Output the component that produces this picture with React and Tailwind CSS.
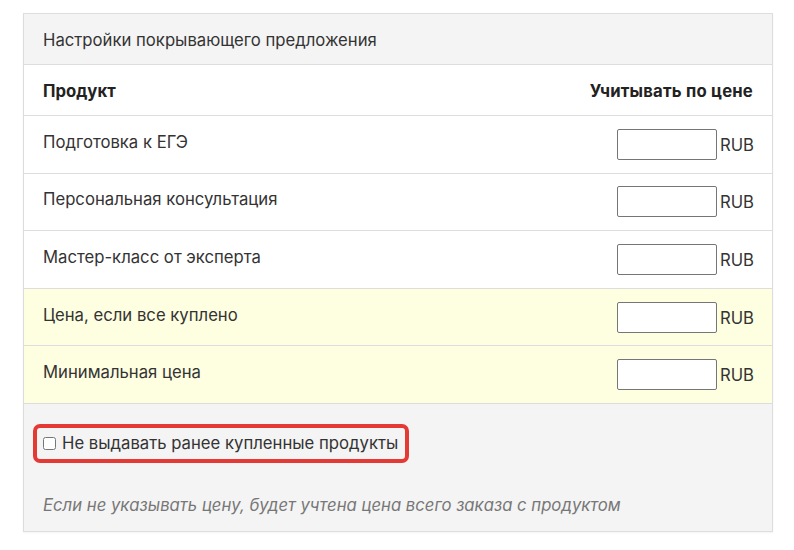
import React from 'react';

const rows = [
  { name: 'Подготовка к ЕГЭ', highlight: false },
  { name: 'Персональная консультация', highlight: false },
  { name: 'Мастер-класс от эксперта', highlight: false },
  { name: 'Цена, если все куплено', highlight: true },
  { name: 'Минимальная цена', highlight: true },
];

const App = () => {
  return (
    <div className="min-h-screen bg-white pt-[13px] pl-[23px] text-[#333]" style={{ fontFamily: 'Inter, "Noto Sans", sans-serif' }}>
      <div className="w-[750px] border border-[#dddddd] shadow-[0_1px_2px_rgba(0,0,0,0.05)]">
        {/* Panel heading */}
        <div className="h-[51px] bg-[#f4f4f4] border-b border-[#dddddd] flex items-center px-[19px] pt-[3px] text-[16.7px] text-[#333]">
          Настройки покрывающего предложения
        </div>

        {/* Table header */}
        <div className="h-[51px] border-b border-[#dddddd] flex items-center justify-between px-[19px] pt-[3px] text-[16.7px] font-bold text-[#222]">
          <span>Продукт</span>
          <span className="tracking-[0.2px]">Учитывать по цене</span>
        </div>

        {/* Product rows */}
        {rows.map((row) => (
          <div
            key={row.name}
            className={`h-[57.6px] flex items-center justify-between pl-[19px] pr-[18px] border-b border-[#dddddd] ${
              row.highlight ? 'bg-[#fefee0]' : 'bg-white'
            }`}
          >
            <span className="text-[16.7px] text-[#333] -mt-[4px]">{row.name}</span>
            <div className="flex items-center gap-[3px]">
              <input
                type="text"
                className="w-[100px] h-[31px] bg-white border border-[#767676] rounded-[2px] outline-none px-1"
              />
              <span className="text-[16.7px] text-[#333] mt-[2px]">RUB</span>
            </div>
          </div>
        ))}

        {/* Footer options */}
        <div className="bg-[#f4f4f4] px-[19px] pt-[20px] pb-[13px]">
          <div className="-ml-[10px] inline-flex items-center gap-[6px] border-[4px] border-[#e53935] rounded-[7px] pl-[6px] pr-[7px] h-[39px]">
            <input type="checkbox" className="w-[13px] h-[13px] m-0 accent-[#555]" />
            <span className="text-[16.7px] text-[#333]">Не выдавать ранее купленные продукты</span>
          </div>
          <p className="mt-[30px] text-[16.7px] italic text-[#777]">
            Если не указывать цену, будет учтена цена всего заказа с продуктом
          </p>
        </div>
      </div>
    </div>
  );
};

export default App;
